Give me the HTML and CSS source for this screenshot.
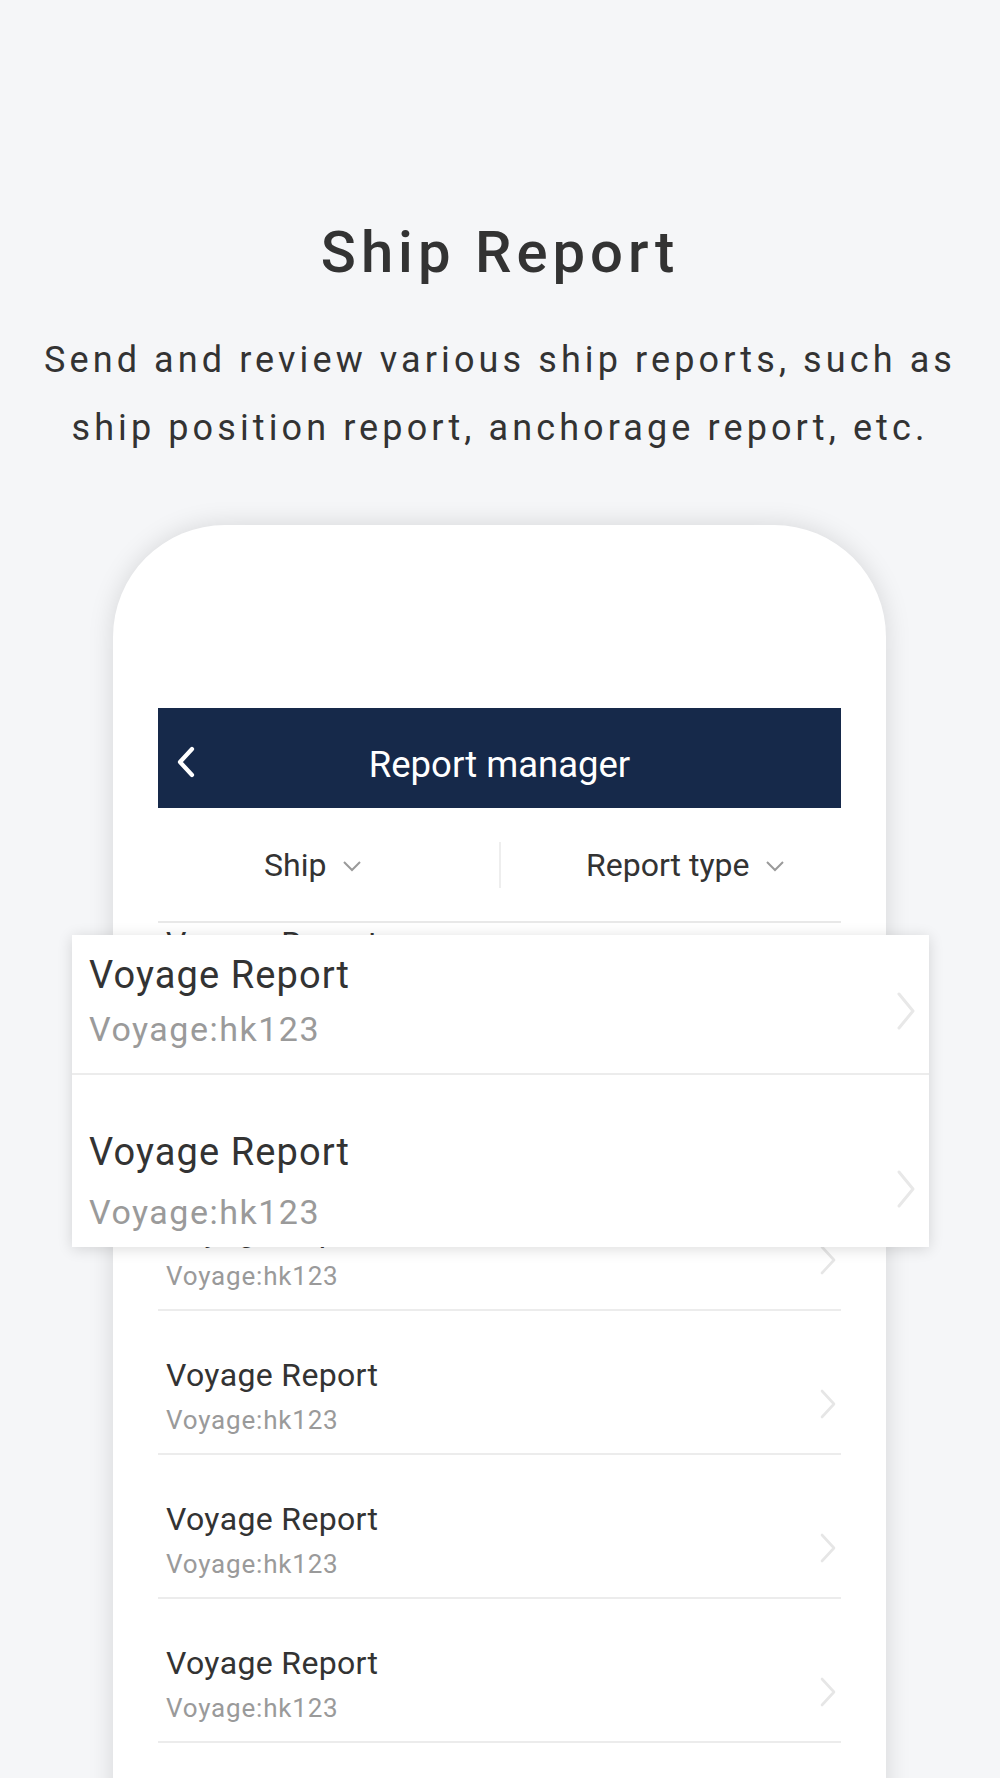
FILE: index.html
```html
<!DOCTYPE html>
<html lang="en">
<head>
<meta charset="utf-8">
<title>Ship Report</title>
<link rel="stylesheet" href="styles.css">
</head>
<body>
<main class="page">
  <header class="hero">
    <h1 class="hero-title">Ship Report</h1>
    <p class="hero-desc">Send and review various ship reports, such as<br>ship position report, anchorage report, etc.</p>
  </header>

  <section class="phone">
    <div class="appbar">
      <span class="appbar-back">
        <svg width="20" height="32" viewBox="0 0 20 32"><polyline points="16,3 4,16 16,29" fill="none" stroke="#fff" stroke-width="4.2" stroke-linecap="round" stroke-linejoin="round"/></svg>
      </span>
      <span class="appbar-title">Report manager</span>
      <span></span>
    </div>

    <div class="filters">
      <div class="filter filter-left">
        <span>Ship</span>
        <svg class="caret" width="20" height="12" viewBox="0 0 20 12"><polyline points="2,2 10,10 18,2" fill="none" stroke="#9a9a9a" stroke-width="2"/></svg>
      </div>
      <div class="filter-sep"></div>
      <div class="filter filter-right">
        <span>Report type</span>
        <svg class="caret" width="20" height="12" viewBox="0 0 20 12"><polyline points="2,2 10,10 18,2" fill="none" stroke="#9a9a9a" stroke-width="2"/></svg>
      </div>
    </div>

    <div class="list">
      <div class="list-inner">
        <div class="row">
          <div class="row-text"><div class="row-title">Voyage Report</div><div class="row-sub">Voyage:hk123</div></div>
          <svg class="row-arrow" width="18" height="30" viewBox="0 0 18 30"><polyline points="3,2 15,15 3,28" fill="none" stroke="#e6e6e6" stroke-width="2.6" stroke-linecap="round" stroke-linejoin="round"/></svg>
        </div>
        <div class="row">
          <div class="row-text"><div class="row-title">Voyage Report</div><div class="row-sub">Voyage:hk123</div></div>
          <svg class="row-arrow" width="18" height="30" viewBox="0 0 18 30"><polyline points="3,2 15,15 3,28" fill="none" stroke="#e6e6e6" stroke-width="2.6" stroke-linecap="round" stroke-linejoin="round"/></svg>
        </div>
        <div class="row">
          <div class="row-text"><div class="row-title">Voyage Report</div><div class="row-sub">Voyage:hk123</div></div>
          <svg class="row-arrow" width="18" height="30" viewBox="0 0 18 30"><polyline points="3,2 15,15 3,28" fill="none" stroke="#e6e6e6" stroke-width="2.6" stroke-linecap="round" stroke-linejoin="round"/></svg>
        </div>
        <div class="row">
          <div class="row-text"><div class="row-title">Voyage Report</div><div class="row-sub">Voyage:hk123</div></div>
          <svg class="row-arrow" width="18" height="30" viewBox="0 0 18 30"><polyline points="3,2 15,15 3,28" fill="none" stroke="#e6e6e6" stroke-width="2.6" stroke-linecap="round" stroke-linejoin="round"/></svg>
        </div>
        <div class="row">
          <div class="row-text"><div class="row-title">Voyage Report</div><div class="row-sub">Voyage:hk123</div></div>
          <svg class="row-arrow" width="18" height="30" viewBox="0 0 18 30"><polyline points="3,2 15,15 3,28" fill="none" stroke="#e6e6e6" stroke-width="2.6" stroke-linecap="round" stroke-linejoin="round"/></svg>
        </div>
        <div class="row">
          <div class="row-text"><div class="row-title">Voyage Report</div><div class="row-sub">Voyage:hk123</div></div>
          <svg class="row-arrow" width="18" height="30" viewBox="0 0 18 30"><polyline points="3,2 15,15 3,28" fill="none" stroke="#e6e6e6" stroke-width="2.6" stroke-linecap="round" stroke-linejoin="round"/></svg>
        </div>
        <div class="row">
          <div class="row-text"><div class="row-title">Voyage Report</div><div class="row-sub">Voyage:hk123</div></div>
          <svg class="row-arrow" width="18" height="30" viewBox="0 0 18 30"><polyline points="3,2 15,15 3,28" fill="none" stroke="#e6e6e6" stroke-width="2.6" stroke-linecap="round" stroke-linejoin="round"/></svg>
        </div>
      </div>
    </div>

    <div class="zoom-card">
      <div class="zrow zrow-first">
        <div class="zrow-text"><div class="zrow-title">Voyage Report</div><div class="zrow-sub">Voyage:hk123</div></div>
        <svg class="zrow-arrow" width="22" height="40" viewBox="0 0 22 40"><polyline points="4,3 18,20 4,37" fill="none" stroke="#e8e8e8" stroke-width="3" stroke-linecap="round" stroke-linejoin="round"/></svg>
      </div>
      <div class="zrow zrow-second">
        <div class="zrow-text"><div class="zrow-title">Voyage Report</div><div class="zrow-sub zrow-sub-wide">Voyage:hk123</div></div>
        <svg class="zrow-arrow" width="22" height="40" viewBox="0 0 22 40"><polyline points="4,3 18,20 4,37" fill="none" stroke="#e8e8e8" stroke-width="3" stroke-linecap="round" stroke-linejoin="round"/></svg>
      </div>
    </div>
  </section>
</main>
</body>
</html>
```

FILE: styles.css
```css
* { box-sizing: border-box; }

html, body {
  margin: 0;
  padding: 0;
}

body {
  background: #f5f6f8;
  font-family: Roboto, "Noto Sans", Arial, sans-serif;
  color: #333;
  height: 1778px;
  overflow: hidden;
}

.page {
  width: 1000px;
  padding-top: 217px;
}

.hero {
  text-align: center;
}

.hero-title {
  margin: 0;
  font-size: 58px;
  line-height: 70px;
  font-weight: 500;
  letter-spacing: 5px;
  color: #333;
}

.hero-desc {
  margin: 39px 0 0;
  font-size: 36px;
  line-height: 68px;
  font-weight: 400;
  letter-spacing: 4.1px;
  color: #333;
}

.phone {
  position: relative;
  width: 773px;
  height: 1300px;
  margin: 63px 0 0 113px;
  padding: 183px 45px 0;
  background: #fff;
  border-radius: 112px 112px 0 0;
  box-shadow: 0 0 26px rgba(0, 0, 0, 0.13);
}

.appbar {
  height: 100px;
  background: #16294a;
  display: grid;
  grid-template-columns: 1fr auto 1fr;
  align-items: center;
}

.appbar-back {
  display: flex;
  align-items: center;
  padding-left: 18px;
  padding-top: 8px;
}

.appbar-title {
  color: #fff;
  font-size: 36.5px;
  line-height: 44px;
  padding-top: 14px;
}

.filters {
  height: 115px;
  display: flex;
  align-items: center;
  border-bottom: 2px solid #e8e8e8;
}

.filter {
  flex: 1;
  display: flex;
  justify-content: center;
  align-items: center;
  gap: 16px;
  font-size: 32px;
  line-height: 40px;
  color: #333;
}

.filter-left { padding-right: 30px; }
.filter-right { padding-left: 30px; }

.caret { margin-top: 2px; }

.filter-sep {
  width: 2px;
  height: 46px;
  background: #eeeeee;
}

.list {
  height: 900px;
  overflow: hidden;
}

.list-inner {
  margin-top: -44px;
}

.row {
  height: 144px;
  display: flex;
  padding: 44px 4px 0 8px;
  border-bottom: 2px solid #ececec;
}

.row-text {
  flex: 1;
}

.row-title {
  font-size: 32px;
  line-height: 40px;
  letter-spacing: 0.35px;
  color: #333;
}

.row-sub {
  margin-top: 8px;
  font-size: 26px;
  line-height: 34px;
  letter-spacing: 0.8px;
  color: #9a9a9a;
}

.row-arrow {
  margin-top: 34px;
}

.zoom-card {
  position: absolute;
  left: -41px;
  top: 410px;
  width: 857px;
  height: 312px;
  background: #fff;
  box-shadow: 0 2px 14px rgba(0, 0, 0, 0.14);
  overflow: hidden;
}

.zrow {
  display: flex;
  padding-left: 17px;
  padding-right: 12px;
}

.zrow-first {
  height: 140px;
  padding-top: 18px;
  border-bottom: 2px solid #ececec;
}

.zrow-second {
  height: 172px;
  padding-top: 55px;
}

.zrow-text { flex: 1; }

.zrow-title {
  font-size: 38px;
  line-height: 44px;
  letter-spacing: 1.1px;
  color: #333;
}

.zrow-sub {
  margin-top: 12px;
  font-size: 34px;
  line-height: 40px;
  letter-spacing: 1.5px;
  color: #9a9a9a;
}

.zrow-sub-wide { margin-top: 18px; }

.zrow-arrow { margin-top: 38px; }
.zrow-second .zrow-arrow { margin-top: 39px; }
```
